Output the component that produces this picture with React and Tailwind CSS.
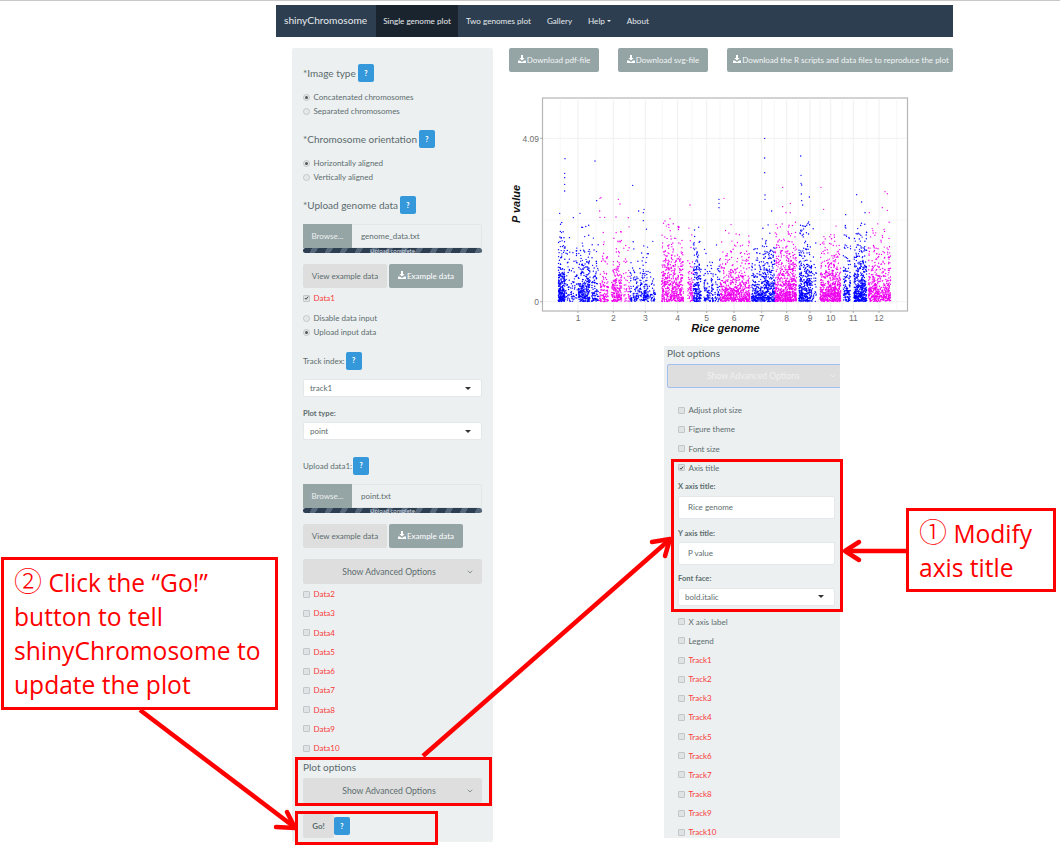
import { ChevronDown } from 'lucide-react';

const FONT = "font-['Lato','Noto_Sans',sans-serif]";

// small seeded random so the plot looks the same on every load
let seed = 12345;
const rnd = () => {
  seed = (seed * 16807) % 2147483647;
  return seed / 2147483647;
};

const BLUE = '#0000ff';
const PINK = '#ee00ee';

// x0, x1, count, mean height, colour (x in reference zoom units)
const segments = [
  [175, 195, 170, 16, BLUE], [195, 232, 60, 16, BLUE], [235, 270, 180, 14, BLUE], [275, 295, 60, 14, BLUE],
  [298, 325, 70, 12, PINK], [335, 365, 130, 14, PINK], [370, 390, 30, 22, PINK],
  [390, 425, 70, 9, BLUE], [425, 445, 70, 14, BLUE], [445, 468, 25, 7, BLUE],
  [485, 550, 320, 16, PINK], [563, 580, 50, 14, PINK],
  [580, 603, 120, 18, BLUE], [612, 640, 70, 10, BLUE], [645, 660, 30, 12, BLUE],
  [660, 750, 380, 12, PINK],
  [755, 785, 120, 10, BLUE], [785, 825, 220, 16, BLUE],
  [825, 890, 420, 16, PINK],
  [897, 935, 230, 18, BLUE], [935, 950, 20, 12, BLUE],
  [960, 1022, 380, 14, PINK],
  [1030, 1052, 90, 18, BLUE], [1062, 1100, 280, 16, BLUE],
  [1105, 1172, 300, 14, PINK],
];

const blueTop = [[195,386],[194,430],[194,443],[194,463],[194,483],[285,393],[290,512],[179,550],[240,550],[220,563],[398,466],[416,543],[432,538],[430,548],[430,572],[794,325],[794,384],[794,428],[795,495],[795,508],[902,378],[903,436],[903,460],[905,465],[904,492],[928,501],[908,525],[905,512],[1070,494],[1085,516],[1037,554],[657,508],[657,520],[657,533],[815,543],[1095,548]];
const pinkTop = [[303,502],[300,505],[355,508],[360,522],[348,561],[385,563],[299,543],[300,562],[314,562],[570,525],[672,505],[848,472],[871,520],[858,548],[871,548],[848,530],[963,472],[1155,485],[1162,491],[1147,533],[1162,541],[971,538],[495,573],[510,566],[534,590],[1108,548]];

const points = [];
segments.forEach(([x0, x1, n, mean, c]) => {
  const count = Math.round(n * 1.5);
  for (let i = 0; i < count; i++) {
    let h = -Math.log(1 - rnd()) * mean * 1.25;
    // tall ones are redrawn so the cloud has no flat top
    while (h > 80) h = rnd() * 80;
    points.push([500 + (x0 + rnd() * (x1 - x0)) / 3, 301.5 - h, c]);
  }
});
blueTop.forEach(([x, y]) => points.push([500 + x / 3, 30 + y / 3, BLUE]));
pinkTop.forEach(([x, y]) => points.push([500 + x / 3, 30 + y / 3, PINK]));

const ticks = [[578, '1'], [613.3, '2'], [645.3, '3'], [677.7, '4'], [706.7, '5'], [734, '6'], [761.7, '7'], [786.7, '8'], [810, '9'], [830.7, '10'], [853.3, '11'], [879, '12']];
const minor = [560.3, 596, 630, 662.3, 692, 720, 748.3, 774.3, 798.3, 820, 842.3, 866.7, 896.7];

function ManhattanPlot() {
  return (
    <svg width="444" height="250" viewBox="509 90 444 250" className="block">
      <rect x="542.5" y="98" width="365" height="213" fill="#fff" stroke="#b5b5b5" strokeWidth="1.2" />
      {minor.map((x) => <line key={x} x1={x} x2={x} y1="98.5" y2="310.5" stroke="#f4f4f4" strokeWidth="0.7" />)}
      {ticks.map(([x]) => <line key={x} x1={x} x2={x} y1="98.5" y2="310.5" stroke="#ececec" strokeWidth="0.8" />)}
      <line x1="543" x2="907" y1="138.3" y2="138.3" stroke="#ececec" strokeWidth="0.8" />
      <line x1="543" x2="907" y1="220" y2="220" stroke="#f4f4f4" strokeWidth="0.7" />
      <line x1="543" x2="907" y1="301.7" y2="301.7" stroke="#ececec" strokeWidth="0.8" />
      {points.map(([x, y, c], i) => <circle key={i} cx={x} cy={y} r="0.7" fill={c} />)}
      <line x1="540" x2="542.5" y1="138.3" y2="138.3" stroke="#888" strokeWidth="0.7" />
      <line x1="540" x2="542.5" y1="301.7" y2="301.7" stroke="#888" strokeWidth="0.7" />
      <text x="539" y="141.5" textAnchor="end" fontSize="8.5" fill="#6f6f6f" fontFamily="Liberation Sans">4.09</text>
      <text x="539" y="305" textAnchor="end" fontSize="8.5" fill="#6f6f6f" fontFamily="Liberation Sans">0</text>
      {ticks.map(([x, t]) => (
        <g key={t}>
          <line x1={x} x2={x} y1="311" y2="313" stroke="#888" strokeWidth="0.7" />
          <text x={x} y="321" textAnchor="middle" fontSize="8.5" fill="#6f6f6f" fontFamily="Liberation Sans">{t}</text>
        </g>
      ))}
      <text x="725.5" y="332" textAnchor="middle" fontSize="11" fontWeight="bold" fontStyle="italic" fill="#111" fontFamily="Liberation Sans">Rice genome</text>
      <text transform="translate(520 204) rotate(-90)" textAnchor="middle" fontSize="11" fontWeight="bold" fontStyle="italic" fill="#111" fontFamily="Liberation Sans">P value</text>
    </svg>
  );
}

function DownloadGlyph() {
  return (
    <svg width="8" height="8" viewBox="0 0 8 8" className="inline-block mr-[1px] -mt-[2px]" fill="#fff">
      <path d="M3 0h2v3h1.7L4 5.6 1.3 3H3z" />
      <path d="M0 5.4h1.8L4 7l2.2-1.6H8V8H0z" />
    </svg>
  );
}

function Help({ className }) {
  return (
    <span className={`inline-flex w-[16px] h-[18px] items-center justify-center rounded-[2px] bg-[#3498db] text-white text-[7px] font-black ${className}`}>?</span>
  );
}

function Radio({ on, label }) {
  return (
    <div className="flex items-center h-[14px] text-[8px] text-[#5d6d6e]">
      <span className="flex w-[7px] h-[7px] ml-[-0.5px] mr-[4px] items-center justify-center rounded-full border border-[#c3c7c9] bg-[#e6e9ea]">
        {on && <span className="w-[3px] h-[3px] rounded-full bg-[#555]" />}
      </span>
      {label}
    </div>
  );
}

function Check({ on, label, red, className }) {
  return (
    <div className={`flex items-center h-[14px] text-[8px] ${red ? 'text-[#f83a3a]' : 'text-[#5d6d6e]'} ${className}`}>
      <span className="flex w-[7px] h-[7px] ml-[-0.5px] mr-[4px] items-center justify-center rounded-[1px] border border-[#c3c7c9] bg-[#dfe3e5]">
        {on && (
          <svg width="6" height="6" viewBox="0 0 6 6">
            <path d="M1 3l1.4 1.5L5 1.3" fill="none" stroke="#444" strokeWidth="1.2" />
          </svg>
        )}
      </span>
      {label}
    </div>
  );
}

function Heading({ text, className }) {
  return (
    <div className={`flex items-center h-[18px] text-[10px] text-[#5b6b6d] ${className}`}>
      {text}
      <Help className="ml-[2px]" />
    </div>
  );
}

function FileInput({ name, className }) {
  return (
    <div className={className}>
      <div className="flex h-[24px] rounded-t-[2px] border border-[#e2e7e9]">
        <div className="flex w-[49px] -m-[1px] mr-0 items-center justify-center bg-[#95a5a6] text-[8px] text-[#ecf0f1]">Browse...</div>
        <div className="flex items-center pl-[9px] text-[8px] text-[#5d6d6e]">{name}</div>
      </div>
      <div className="flex h-[5px] items-center justify-center overflow-hidden rounded-full bg-[repeating-linear-gradient(120deg,#2c3e50_0px,#2c3e50_8px,#55677a_8px,#55677a_13px)] text-[6px] leading-none text-[#d8dfe4]">
        Upload complete
      </div>
    </div>
  );
}

function ExampleButtons({ className }) {
  return (
    <div className={`flex gap-[2px] h-[24px] text-[8px] ${className}`}>
      <div className="flex w-[84px] items-center justify-center rounded-[2px] bg-[#dedede] text-[#5d6d6e]">View example data</div>
      <div className="flex w-[74px] items-center justify-center rounded-[2px] bg-[#95a5a6] text-white">
        <DownloadGlyph />Example data
      </div>
    </div>
  );
}

function AdvancedButton({ className }) {
  return (
    <div className={`relative flex h-[25px] items-center justify-center rounded-[2px] bg-[#dedede] pr-[7px] text-[8.7px] text-[#5d6d6e] ${className}`}>
      Show Advanced Options
      <ChevronDown size={8} className="absolute right-[8px]" />
    </div>
  );
}

function Select({ value, className }) {
  return (
    <div className={`flex h-[18px] items-center justify-between rounded-[2px] border border-[#e4e8ea] bg-white pl-[6px] pr-[10px] text-[8px] text-[#5d6d6e] ${className}`}>
      {value}
      <span className="w-0 h-0 border-x-[3px] border-t-[3px] border-x-transparent border-t-[#333]" />
    </div>
  );
}

function TextField({ value, className }) {
  return (
    <div className={`flex h-[23px] items-center rounded-[2px] border border-[#e4e8ea] bg-white pl-[9px] text-[8px] text-[#5d6d6e] ${className}`}>{value}</div>
  );
}

function Bold({ text, className }) {
  return <div className={`flex h-[10px] items-center text-[7.6px] font-bold text-[#5d6d6e] ${className}`}>{text}</div>;
}

function Sidebar() {
  const rest = ['Data2', 'Data3', 'Data4', 'Data5', 'Data6', 'Data7', 'Data8', 'Data9', 'Data10'];
  return (
    <div className="w-[201px] h-[794px] shrink-0 rounded-[2px] bg-[#ecf0f1] px-[11px] pt-[16px]">
      <Heading text="*Image type" />
      <div className="mt-[8px]">
        <Radio on label="Concatenated chromosomes" />
        <Radio label="Separated chromosomes" />
      </div>
      <Heading text="*Chromosome orientation" className="mt-[12px]" />
      <div className="mt-[8px]">
        <Radio on label="Horizontally aligned" />
        <Radio label="Vertically aligned" />
      </div>
      <Heading text="*Upload genome data" className="mt-[12px]" />
      <FileInput name="genome_data.txt" className="mt-[10px]" />
      <ExampleButtons className="mt-[11px]" />
      <Check on red label="Data1" className="mt-[3px]" />
      <div className="mt-[6px]">
        <Radio label="Disable data input" />
        <Radio on label="Upload input data" />
      </div>
      <div className="mt-[12px] flex h-[19px] items-center text-[8px] text-[#5d6d6e]">Track index:<Help className="ml-[1px]" /></div>
      <Select value="track1" className="mt-[9px]" />
      <Bold text="Plot type:" className="mt-[12px]" />
      <Select value="point" className="mt-[3px]" />
      <div className="mt-[16px] flex h-[19px] items-center text-[8px] text-[#5d6d6e]">Upload data1:<Help className="ml-[1px]" /></div>
      <FileInput name="point.txt" className="mt-[9px]" />
      <ExampleButtons className="mt-[11px]" />
      <AdvancedButton className="mt-[11px]" />
      <div className="mt-[3px] flex flex-col gap-[5.25px]">
        {rest.map((d) => <Check key={d} red label={d} />)}
      </div>
      <div className="mt-[5px] h-[14px] text-[10px] leading-[14px] text-[#5b6b6d]">Plot options</div>
      <AdvancedButton className="mt-[4px] h-[24px]" />
      <div className="mt-[11px] flex items-center">
        <div className="flex w-[31px] h-[24px] items-center justify-center rounded-[2px] bg-[#dedede] text-[8px] font-bold text-[#5d6d6e]">Go!</div>
        <Help />
      </div>
    </div>
  );
}

function OptionsPanel() {
  const tracks = ['Track1', 'Track2', 'Track3', 'Track4', 'Track5', 'Track6', 'Track7', 'Track8', 'Track9', 'Track10'];
  return (
    <div className="ml-[155px] mt-[6px] w-[176px] h-[492px] bg-[#ecf0f1] pl-[3px] overflow-hidden">
      <div className="h-[14px] text-[10px] leading-[14px] text-[#5b6b6d]">Plot options</div>
      <div className="relative mt-[4px] flex w-[180px] h-[24px] items-center rounded-[2px] border border-[#a3bff0] bg-[#dedede] pl-[39px] text-[8.6px] text-[#f1f1f1]">
        Show Advanced Options
        <ChevronDown size={8} className="absolute left-[161px] text-[#f1f1f1]" />
      </div>
      <div className="ml-[11px] w-[157px]">
        <div className="mt-[15px] flex flex-col gap-[5.25px]">
          <Check label="Adjust plot size" />
          <Check label="Figure theme" />
          <Check label="Font size" />
          <Check on label="Axis title" />
        </div>
        <Bold text="X axis title:" className="mt-[7px]" />
        <TextField value="Rice genome" className="mt-[4px]" />
        <Bold text="Y axis title:" className="mt-[10px]" />
        <TextField value="P value" className="mt-[3px]" />
        <Bold text="Font face:" className="mt-[9px]" />
        <Select value="bold.italic" className="mt-[4px]" />
        <div className="mt-[9px] flex flex-col gap-[5.15px]">
          <Check label="X axis label" />
          <Check label="Legend" />
          {tracks.map((t) => <Check key={t} red label={t} />)}
        </div>
      </div>
    </div>
  );
}

function Annotations() {
  const box = 'absolute border-[3.5px] border-[#ff0000]';
  const note = "absolute bg-white border-[3.5px] border-[#ff0000] font-['Open_Sans','Noto_Sans_CJK_JP',sans-serif] text-[#ff0000] text-[24.6px] leading-[34px]";
  const circled = "font-['Noto_Sans_CJK_JP',sans-serif] text-[28px] font-light leading-[0]";
  return (
    <>
      <div className={`${box} left-[671px] top-[459px] w-[172px] h-[153px]`} />
      <div className={`${box} left-[295px] top-[757px] w-[197px] h-[49px]`} />
      <div className={`${box} left-[295px] top-[811px] w-[143px] h-[34px]`} />
      <div className={`${note} left-[906px] top-[508px] w-[150px] h-[84px] pl-[10px] pt-[6px]`}>
        <div><span className={circled}>①</span> Modify</div>
        <div>axis title</div>
      </div>
      <div className={`${note} left-[1px] top-[557px] w-[277px] h-[153px] pl-[10px] pt-[6px]`}>
        <div><span className={circled}>②</span> Click the “Go!”</div>
        <div>button to tell</div>
        <div>shinyChromosome to</div>
        <div>update the plot</div>
      </div>
      <svg width="1060" height="847" className="absolute left-0 top-0 pointer-events-none" fill="none" stroke="#ff0000" strokeWidth="4.5">
        <path d="M906 551H846" />
        <path d="M859 542L845 551L859 560" strokeLinecap="round" strokeLinejoin="round" />
        <path d="M423 756L668 541" />
        <path d="M652 542L670 539L665 556" strokeLinecap="round" strokeLinejoin="round" />
        <path d="M140 710L293 826" />
        <path d="M276 827L295 828L287 812" strokeLinecap="round" strokeLinejoin="round" />
      </svg>
    </>
  );
}

export default function App() {
  const nav = ['Two genomes plot', 'Gallery'];
  const downloads = [
    ['Download pdf-file', 'w-[90px]'],
    ['Download svg-file', 'w-[90px] ml-[19px]'],
    ['Download the R scripts and data files to reproduce the plot', 'w-[226px] ml-[19px] pl-[2px]'],
  ];
  return (
    <div className={`relative w-[1060px] h-[847px] overflow-hidden bg-white ${FONT}`}>
      <div className="h-[1px] bg-[#c8c8c8]" />
      <nav className="ml-[276px] mt-[4px] flex w-[677px] h-[32px] items-center bg-[#2c3e50] text-[8.1px] text-[#e6eaed]">
        <div className="w-[100px] pl-[8px] text-[10.2px] text-[#e6eaed]">shinyChromosome</div>
        <div className="flex h-full w-[82px] items-center justify-center bg-[#1a242f]">Single genome plot</div>
        {nav.map((n) => <div key={n} className="ml-[8px] mr-[8px]">{n}</div>)}
        <div className="ml-[8px] flex items-center">Help<span className="ml-[2px] w-0 h-0 border-x-[2px] border-t-[2px] border-x-transparent border-t-[#e6eaed]" /></div>
        <div className="ml-[16px]">About</div>
      </nav>
      <div className="ml-[292px] mt-[11px] flex w-[661px] overflow-hidden">
        <Sidebar />
        <div className="ml-[16px] w-[444px] overflow-hidden">
          <div className="flex h-[24px] text-[8px] text-[#f3f5f5]">
            {downloads.map(([t, w]) => (
              <div key={t} className={`flex shrink-0 items-center justify-center whitespace-nowrap rounded-[2px] bg-[#95a5a6] ${w}`}>
                <DownloadGlyph />{t}
              </div>
            ))}
          </div>
          <div className="mt-[18px]">
            <ManhattanPlot />
          </div>
          <OptionsPanel />
        </div>
      </div>
      <Annotations />
    </div>
  );
}
